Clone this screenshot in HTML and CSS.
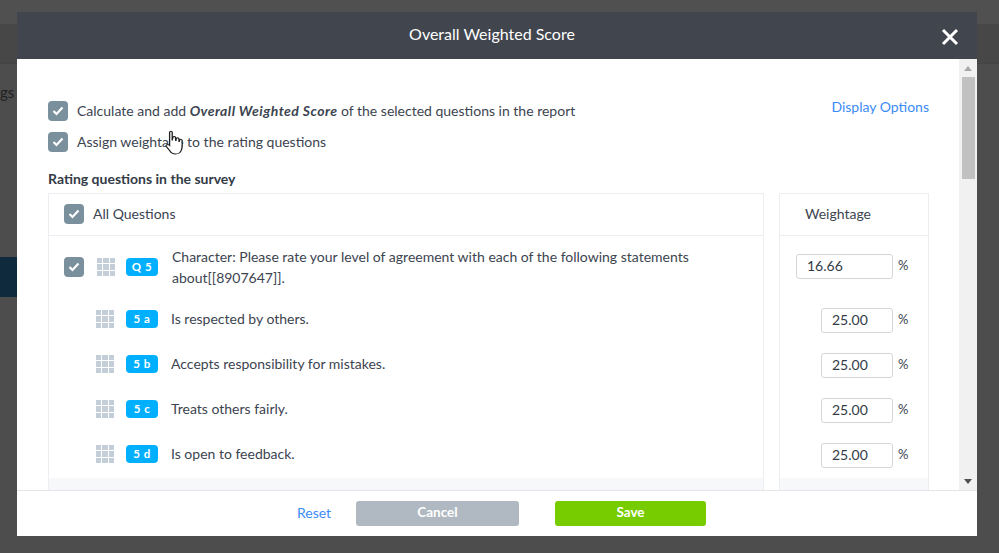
FILE: index.html
```html
<!DOCTYPE html>
<html>
	<head>
		<meta charset="UTF-8">
		<title>Overall Weighted Score</title>
		<link rel="stylesheet" href="styles.css">
	</head>
	<body>
		<!-- page behind the overlay -->
		<div class="page">
			<div class="page-top"></div>
			<div class="page-bar"></div>
			<div class="page-side">gs</div>
			<div class="page-active"></div>
		</div>

		<div class="modal">
			<div class="modal-head">
				<span class="modal-title">Overall Weighted Score</span>
				<svg class="close" width="18" height="18" viewBox="0 0 18 18"><path d="M2 2L16 16M16 2L2 16" stroke="#fff" stroke-width="3" fill="none"/></svg>
			</div>
			<div class="modal-body">
				<div class="content">
					<div class="options">
						<div class="opt-list">
							<div class="opt">
								<span class="check"><svg width="12" height="10" viewBox="0 0 12 10"><path d="M1.5 5L4.5 8L10.5 1.5" stroke="#fff" stroke-width="2.2" fill="none"/></svg></span>
								<span class="label">Calculate and add <em>Overall Weighted Score</em> of the selected questions in the report</span>
							</div>
							<div class="opt">
								<span class="check"><svg width="12" height="10" viewBox="0 0 12 10"><path d="M1.5 5L4.5 8L10.5 1.5" stroke="#fff" stroke-width="2.2" fill="none"/></svg></span>
								<span class="label">Assign weightage to the rating questions</span>
							</div>
						</div>
						<a class="link display">Display Options</a>
					</div>
					<h4 class="sub-title">Rating questions in the survey</h4>
					<div class="tables">
						<div class="t-left">
							<div class="t-head">
								<span class="check"><svg width="12" height="10" viewBox="0 0 12 10"><path d="M1.5 5L4.5 8L10.5 1.5" stroke="#fff" stroke-width="2.2" fill="none"/></svg></span>
								<span>All Questions</span>
							</div>
							<div class="row row-q">
								<span class="check"><svg width="12" height="10" viewBox="0 0 12 10"><path d="M1.5 5L4.5 8L10.5 1.5" stroke="#fff" stroke-width="2.2" fill="none"/></svg></span>
								<span class="grid"><i></i><i></i><i></i><i></i><i></i><i></i><i></i><i></i><i></i></span>
								<span class="badge">Q 5</span>
								<span class="q-text">Character: Please rate your level of agreement with each of the following statements about[[8907647]].</span>
							</div>
							<div class="row">
								<span class="grid"><i></i><i></i><i></i><i></i><i></i><i></i><i></i><i></i><i></i></span>
								<span class="badge">5 a</span>
								<span class="label">Is respected by others.</span>
							</div>
							<div class="row">
								<span class="grid"><i></i><i></i><i></i><i></i><i></i><i></i><i></i><i></i><i></i></span>
								<span class="badge">5 b</span>
								<span class="label">Accepts responsibility for mistakes.</span>
							</div>
							<div class="row">
								<span class="grid"><i></i><i></i><i></i><i></i><i></i><i></i><i></i><i></i><i></i></span>
								<span class="badge">5 c</span>
								<span class="label">Treats others fairly.</span>
							</div>
							<div class="row">
								<span class="grid"><i></i><i></i><i></i><i></i><i></i><i></i><i></i><i></i><i></i></span>
								<span class="badge">5 d</span>
								<span class="label">Is open to feedback.</span>
							</div>
							<div class="band"></div>
						</div>
						<div class="t-right">
							<div class="t-head weight">Weightage</div>
							<div class="w-row w-q"><span class="input input-q">16.66</span><span class="pct">%</span></div>
							<div class="w-row"><span class="input">25.00</span><span class="pct">%</span></div>
							<div class="w-row"><span class="input">25.00</span><span class="pct">%</span></div>
							<div class="w-row"><span class="input">25.00</span><span class="pct">%</span></div>
							<div class="w-row"><span class="input">25.00</span><span class="pct">%</span></div>
							<div class="band"></div>
						</div>
					</div>
				</div>
				<div class="scrollbar">
					<span class="arrow-up"></span>
					<span class="thumb"></span>
					<span class="arrow-down"></span>
				</div>
			</div>
			<div class="modal-foot">
				<a class="link reset">Reset</a>
				<span class="btn btn-cancel">Cancel</span>
				<span class="btn btn-save">Save</span>
			</div>
		</div>

		<!-- mouse pointer caught in the screenshot -->
		<svg class="hand" width="21" height="26" viewBox="0 0 16 26" preserveAspectRatio="none"><path d="M3.5 15.500L3.500 2.500C3.500 0.800 5.500 0.800 5.500 2.500L5.500 10.500L6 7.500C6.300 6.300 7.800 6.300 8 7.500L8.200 11L8.700 8.500C9 7.400 10.500 7.400 10.600 8.700L10.700 12L11.200 10C11.600 9 13 9.200 13 10.400C13 14 13.500 17 12.500 20C11.800 22.800 10.500 24 8 24C5.500 24 4.500 22.800 3.500 20.500L1 16.500C0.300 15 2 14 3 15Z" fill="#fff" stroke="#222" stroke-width="1"/></svg>
	</body>
</html>
```

FILE: styles.css
```css
*{
	margin: 0;
	padding: 0;
	box-sizing: border-box;
}
html,body{
	height: 100%;
	overflow: hidden;
}
body{
	background: #4d4d4d;
	font-family: "Lato", "Liberation Sans", sans-serif;
	font-size: 14px;
	color: #3c4450;
}

/* page behind */
.page{
	height: 100%;
}
.page-top{
	height: 24px;
	background: #505050;
}
.page-bar{
	background: #474747;
	border-bottom: 1px solid #444;
	height: 40px;
}
.page-side{
	width: 17px;
	height: 193px;
	padding-top: 19px;
	font-size: 15px;
	line-height: 18px;
	color: #222;
	overflow: hidden;
	white-space: nowrap;
}
.page-active{
	width: 17px;
	height: 40px;
	background: #0f2a3d;
}

/* modal */
.modal{
	position: absolute;
	left: 17px;
	top: 12px;
	width: 960px;
	height: 524px;
	background: #fff;
	display: flex;
	flex-direction: column;
}
.modal-head{
	height: 47px;
	flex: none;
	background: #41454d;
	display: flex;
	align-items: center;
	justify-content: center;
	padding: 0 10px 5px 0;
	position: relative;
}
.modal-title{
	color: #fff;
	font-size: 16px;
}
.close{
	position: absolute;
	right: 18px;
	top: 16px;
}
.modal-body{
	flex: 1;
	display: flex;
	min-height: 0;
	overflow: hidden;
}
.content{
	flex: 1;
	padding: 42px 30px 0 31px;
	min-width: 0;
}
.scrollbar{
	width: 18px;
	flex: none;
	background: #f1f1f1;
	display: flex;
	flex-direction: column;
	align-items: center;
	padding: 7px 0 6px;
}
.arrow-up{
	border: 4px solid transparent;
	border-top: 0;
	border-bottom: 5px solid #a9a9a9;
}
.thumb{
	width: 13px;
	height: 102px;
	margin-top: 6px;
	background: #c1c1c1;
}
.arrow-down{
	margin-top: auto;
	border: 4px solid transparent;
	border-bottom: 0;
	border-top: 5px solid #505050;
}

/* options */
.options{
	display: flex;
	justify-content: space-between;
	align-items: flex-start;
}
.opt-list{
	display: flex;
	flex-direction: column;
	gap: 11px;
}
.opt{
	display: flex;
	align-items: center;
	gap: 9px;
	height: 20px;
}
.opt em{
	font-weight: 700;
	letter-spacing: 0.450px;
}
.label{
	padding-bottom: 2px;
}
.check{
	width: 20px;
	height: 20px;
	flex: none;
	background: #7a909d;
	border-radius: 4px;
	display: flex;
	align-items: center;
	justify-content: center;
}
.link{
	color: #3b8bf5;
}
.display{
	line-height: 11px;
}
.sub-title{
	margin-top: 19px;
	font-size: 14px;
	font-weight: 700;
	line-height: 16px;
	color: #333b47;
}

/* tables */
.tables{
	display: flex;
	gap: 15px;
	margin-top: 6px;
}
.t-left,.t-right{
	border: 1px solid #eceef1;
	border-bottom: 0;
}
.t-left{
	width: 716px;
}
.t-right{
	width: 150px;
}
.t-head{
	height: 42px;
	padding: 0 0 2px 15px;
	display: flex;
	align-items: center;
	gap: 9px;
	border-bottom: 1px solid #eceef1;
}
.weight{
	padding-left: 25px;
}
.row{
	height: 45px;
	display: flex;
	align-items: center;
	padding: 1px 0 0 47px;
}
.row-q{
	height: 60px;
	padding: 2px 0 0 15px;
}
.row-q .grid{
	margin-left: 13px;
}
.row-q .badge{
	margin-left: 11px;
}
.q-text{
	width: 540px;
	line-height: 21px;
	margin-left: 1px;
}
.grid{
	width: 18px;
	height: 18px;
	flex: none;
	display: grid;
	grid-template-columns: repeat(3,1fr);
	gap: 1px;
}
.grid i{
	background: #c3ced8;
}
.badge{
	width: 32px;
	height: 18px;
	margin: 0 13px 0 12px;
	flex: none;
	background: #00b0ff;
	color: #fff;
	border-radius: 4px;
	font-size: 11.500px;
	font-weight: 700;
	text-align: center;
	line-height: 17px;
	letter-spacing: 0.500px;
}
.band{
	height: 20px;
	margin-top: 2px;
	background: #f7f8fa;
}

/* weight inputs */
.w-row{
	height: 45px;
	display: flex;
	align-items: center;
	justify-content: flex-end;
	padding: 4px 20px 0 0;
	gap: 5px;
}
.w-q{
	height: 60px;
	padding-top: 1px;
}
.input{
	width: 72px;
	height: 25px;
	border: 1px solid #d6d6d6;
	border-radius: 3px;
	padding-left: 10px;
	line-height: 22px;
	color: #333b47;
}
.input-q{
	width: 97px;
}
.pct{
	width: 10px;
	font-size: 13px;
	margin-top: -3px;
}

/* footer */
.modal-foot{
	height: 46px;
	flex: none;
	border-top: 1px solid #e3e5e8;
	display: flex;
	align-items: center;
	padding-left: 280px;
}
.reset{
	width: 59px;
	padding-bottom: 3px;
}
.btn{
	height: 25px;
	border-radius: 3px;
	color: #fff;
	font-size: 13.500px;
	font-weight: 700;
	text-align: center;
	line-height: 23px;
}
.btn-cancel{
	width: 163px;
	background: #b0b9c1;
}
.btn-save{
	width: 151px;
	margin-left: 36px;
	background: #77cc00;
}
.hand{
	position: absolute;
	left: 165px;
	top: 130px;
}
```
